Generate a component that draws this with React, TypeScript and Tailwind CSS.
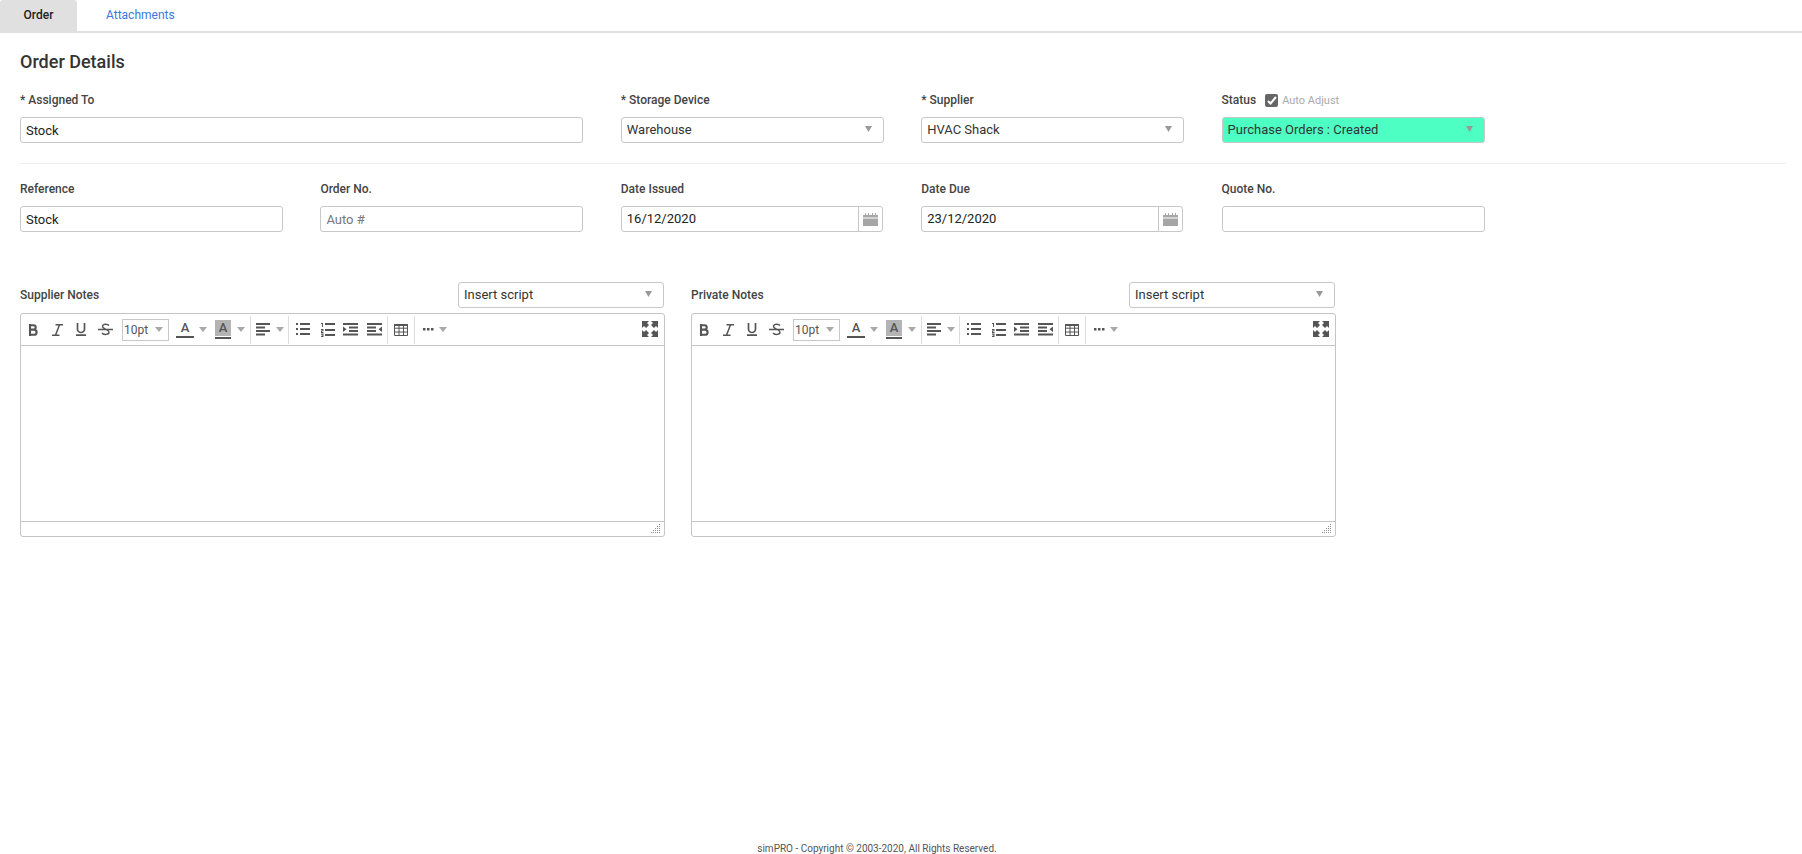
import React from 'react'

const ic = '#555555'

function Caret({ className = '' }: { className?: string }) {
  return (
    <svg width="8" height="5" viewBox="0 0 8 5" className={className}>
      <path d="M0 0h8L4 5z" fill="#a9a9a9" />
    </svg>
  )
}

function Field({ label, children, className = '' }: { label: React.ReactNode; children: React.ReactNode; className?: string }) {
  return (
    <div className={className}>
      <div className="h-4 text-[12px] leading-4 font-medium text-[#444] flex items-center whitespace-nowrap">{label}</div>
      <div className="mt-[9px]">{children}</div>
    </div>
  )
}

function TextInput({ value, placeholder }: { value?: string; placeholder?: string }) {
  return (
    <input
      readOnly
      value={value ?? ''}
      placeholder={placeholder}
      className="block w-full h-[26px] px-[5px] border border-[#c8c8c8] rounded-[3px] text-[13px] text-[#222] placeholder:text-[#777] outline-none bg-white"
    />
  )
}

function SelectBox({ value, className = 'bg-white' }: { value: string; className?: string }) {
  return (
    <div className={`flex items-center justify-between h-[26px] pl-[5px] pr-[11px] border border-[#c8c8c8] rounded-[3px] text-[13px] text-[#333] ${className}`}>
      <span>{value}</span>
      <svg width="7" height="6" viewBox="0 0 7 6" className="-mt-[3px]">
        <path d="M0 0h7L3.500 6z" fill="#999" />
      </svg>
    </div>
  )
}

function DateInput({ value }: { value: string }) {
  return (
    <div className="flex h-[26px] border border-[#c8c8c8] rounded-[3px] w-[262px] overflow-hidden">
      <div className="flex-1 px-[5px] text-[13px] leading-[24px] text-[#222]">{value}</div>
      <div className="w-[24px] border-l border-[#c8c8c8] flex items-center justify-center">
        <svg width="15" height="13" viewBox="0 0 15 13">
          <path d="M0 2h2V0h1v2h2V0h1v2h3V0h1v2h2V0h1v2h2v2.500H0zM0 5.500h15V13H0z" fill="#a6a6a6" />
        </svg>
      </div>
    </div>
  )
}

function Tb({ w = 24, children }: { w?: number; children: React.ReactNode }) {
  return (
    <div className="h-[22px] flex items-center justify-center shrink-0" style={{ width: w }}>
      {children}
    </div>
  )
}

function Sep() {
  return <div className="w-px h-[28px] bg-[#dddddd] shrink-0" />
}

function Lines({ rows }: { rows: [number, number][] }) {
  return (
    <svg width="14" height="13" viewBox="0 0 14 13">
      {rows.map(([x, w], i) => (
        <rect key={i} x={x} y={i * 3.5} width={w} height="2" fill={ic} />
      ))}
    </svg>
  )
}

function Toolbar() {
  return (
    <div className="h-[32px] border-b border-[#c5c5c5] flex items-center">
      <Tb>
        <svg width="10" height="12" viewBox="0 0 10 12" fill="none" stroke={ic} strokeWidth="2.100">
          <path d="M2 0v12M2 1.200h3.500a2.200 2.200 0 0 1 0 4.400H2M2 5.600h4a2.600 2.600 0 0 1 0 5.200H2" />
        </svg>
      </Tb>
      <Tb>
        <svg width="11" height="12" viewBox="0 0 11 12" fill="none" stroke={ic} strokeWidth="1.500">
          <path d="M3.500.800H11M0 11.200h7.500M7.500.800 3.500 11.200" />
        </svg>
      </Tb>
      <Tb>
        <svg width="10" height="13" viewBox="0 0 10 13" fill="none" stroke={ic} strokeWidth="1.700">
          <path d="M1.500 0v6a3.500 3.500 0 0 0 7 0V0M0 12.200h10" />
        </svg>
      </Tb>
      <Tb>
        <svg width="15" height="13" viewBox="0 0 15 13" fill="none" stroke={ic} strokeWidth="1.400">
          <path d="M11 2.500C10 1 5 .300 4.500 3.200 4 6 10.500 6 11 9c.3 2.800-5.500 3.200-7 1M0 6.500h15" />
        </svg>
      </Tb>
      <div className="ml-[5px] w-[47px] h-[22px] border border-[#c8c8c8] flex items-center justify-between pl-[1px] pr-[5px] text-[12px] text-[#555] shrink-0">
        <span>10pt</span>
        <Caret />
      </div>
      <div className="w-[5px] shrink-0" />
      <Tb w={22}>
        <div className="flex flex-col items-center w-[18px] -mt-[1px]">
          <span className="text-[13px] leading-[13px] font-medium text-[#555]">A</span>
          <span className="mt-[2px] w-full h-[2px] bg-[#555]" />
        </div>
      </Tb>
      <Tb w={14}>
        <Caret />
      </Tb>
      <div className="w-[5px] shrink-0" />
      <Tb w={16}>
        <div className="flex flex-col items-center w-[17px] -mt-[1px]">
          <span className="w-[16px] text-center bg-[#b4b4b4] text-[13px] leading-[16px] font-medium text-[#555]">A</span>
          <span className="mt-[1px] w-full h-[2px] bg-[#555]" />
        </div>
      </Tb>
      <Tb w={19}>
        <Caret />
      </Tb>
      <Sep />
      <div className="w-[4px] shrink-0" />
      <Tb w={16}>
        <Lines rows={[[0, 14], [0, 9], [0, 14], [0, 9]]} />
      </Tb>
      <Tb w={17}>
        <Caret />
      </Tb>
      <Sep />
      <Tb w={27}>
        <svg width="14" height="13" viewBox="0 0 14 13" fill={ic}>
          <path d="M0 0h2v2H0zM4 0h10v2H4zM0 5h2v2H0zM4 5h10v2H4zM0 10h2v2H0zM4 10h10v2H4z" />
        </svg>
      </Tb>
      <Tb w={23}>
        <svg width="14" height="14" viewBox="0 0 14 14" fill={ic}>
          <path d="M4 0h10v2H4zM4 6h10v2H4zM4 11h10v2H4zM0 0h2v4H1V1H0zM0 6h2.500v2.200H1v.8h1.500v1H0V7.500h1.500V7H0zM0 10.500h2.500V14H0v-1h1.500v-.5H.5v-.8h1v-.3H0z" />
        </svg>
      </Tb>
      <Tb w={23}>
        <svg width="15" height="13" viewBox="0 0 15 13" fill={ic}>
          <path d="M0 0h15v2H0zM6 3.500h9v2H6zM6 7h9v2H6zM0 10.500h15v2H0zM0 3.500 3.500 6.200 0 9z" />
        </svg>
      </Tb>
      <Tb w={25}>
        <svg width="15" height="13" viewBox="0 0 15 13" fill={ic}>
          <path d="M0 0h15v2H0zM0 3.500h9v2H0zM0 7h9v2H0zM0 10.500h15v2H0zM15 3.500 11.500 6.200 15 9z" />
        </svg>
      </Tb>
      <Sep />
      <Tb w={26}>
        <svg width="14" height="12" viewBox="0 0 14 12" fill="none" stroke={ic}>
          <path d="M.5.500h13v11H.500zM.5 4.200h13M.5 8h13M5 .5v11M9.500.5v11" />
          <path d="M.5 1h13" strokeWidth="2" />
        </svg>
      </Tb>
      <Sep />
      <Tb w={26}>
        <svg width="11" height="3" viewBox="0 0 11 3" fill={ic}>
          <path d="M0 0h2.500v2.500H0zM4 0h2.500v2.500H4zM8 0h2.500v2.500H8z" />
        </svg>
      </Tb>
      <Tb w={4}>
        <Caret className="shrink-0" />
      </Tb>
      <div className="ml-auto mr-[2px] -mt-[1px]">
        <Tb>
          <svg width="16" height="16" viewBox="0 0 16 16" fill={ic}>
            <path d="M0 0h7L5 2l2 2-3 3-2-2-2 2zM16 0v7l-2-2-2 2-3-3 2-2-2-2zM0 16V9l2 2 2-2 3 3-2 2 2 2zM16 16H9l2-2-2-2 3-3 2 2 2-2z" />
          </svg>
        </Tb>
      </div>
    </div>
  )
}

function NotesEditor({ label }: { label: string }) {
  return (
    <div className="w-[645px]">
      <div className="flex items-center justify-between pr-[1px]">
        <span className="text-[12px] font-medium text-[#444]">{label}</span>
        <SelectBox value="Insert script" className="w-[206px] bg-white" />
      </div>
      <div className="mt-[5px] h-[224px] border border-[#c5c5c5] rounded-[3px] flex flex-col">
        <Toolbar />
        <div className="flex-1 bg-white" />
        <div className="h-[15px] border-t border-[#c5c5c5] flex justify-end items-end pr-[3px] pb-[2px]">
          <svg width="10" height="10" viewBox="0 0 10 10" fill="#8f8f9f">
            <path d="M8 0h1v1H8zM6 2h1v1H6zM8 2h1v1H8zM4 4h1v1H4zM6 4h1v1H6zM8 4h1v1H8zM2 6h1v1H2zM4 6h1v1H4zM6 6h1v1H6zM8 6h1v1H8zM0 8h1v1H0zM2 8h1v1H2zM4 8h1v1H4zM6 8h1v1H6zM8 8h1v1H8z" />
          </svg>
        </div>
      </div>
    </div>
  )
}

export default function App() {
  return (
    <div className="h-[854px] overflow-hidden flex flex-col bg-white font-['Roboto',sans-serif]">
      {/* Tabs */}
      <div className="h-[33px] border-b-2 border-[#e0e0e0] flex text-[12px] shrink-0">
        <div className="w-[77px] h-[31px] bg-[#e0e0e0] rounded-t-[3px] flex items-center justify-center font-medium text-[#222] pb-[1px]">Order</div>
        <div className="ml-[29px] h-[31px] flex items-center text-[#3a78e0] pb-[1px]">Attachments</div>
      </div>

      <div className="pl-[20px] flex-1">
        <h3 className="mt-[17px] text-[18px] leading-[24px] font-medium text-[#333]">Order Details</h3>

        <div className="mt-[18px] grid grid-cols-[repeat(6,263px)] gap-x-[37.4px]">
          <Field label="* Assigned To" className="col-span-2">
            <TextInput value="Stock" />
          </Field>
          <Field label="* Storage Device">
            <SelectBox value="Warehouse" />
          </Field>
          <Field label="* Supplier">
            <SelectBox value="HVAC Shack" />
          </Field>
          <Field
            label={
              <>
                Status
                <span className="ml-[9px] w-[13px] h-[13px] rounded-[2px] bg-[#666] inline-flex items-center justify-center">
                  <svg width="10" height="9" viewBox="0 0 10 9" fill="none" stroke="#fff" strokeWidth="2">
                    <path d="M1 5l2.500 2.500L9 1" />
                  </svg>
                </span>
                <span className="ml-[4px] mt-[1px] text-[11px] font-normal text-[#aaa]">Auto Adjust</span>
              </>
            }
          >
            <SelectBox value="Purchase Orders : Created" className="bg-[#4dffc3]" />
          </Field>
        </div>

        <div className="mt-[20px] -ml-px w-[1767px] h-px bg-[#eeeeee]" />

        <div className="mt-[17px] grid grid-cols-[repeat(6,263px)] gap-x-[37.4px]">
          <Field label="Reference">
            <TextInput value="Stock" />
          </Field>
          <Field label="Order No.">
            <TextInput placeholder="Auto #" />
          </Field>
          <Field label="Date Issued">
            <DateInput value="16/12/2020" />
          </Field>
          <Field label="Date Due">
            <DateInput value="23/12/2020" />
          </Field>
          <Field label="Quote No.">
            <TextInput />
          </Field>
        </div>

        <div className="mt-[50px] flex gap-[26px]">
          <NotesEditor label="Supplier Notes" />
          <NotesEditor label="Private Notes" />
        </div>
      </div>

      <div className="h-[11px] pr-[48px] text-center text-[10px] leading-[11px] text-[#555] shrink-0">simPRO - Copyright © 2003-2020, All Rights Reserved.</div>
    </div>
  )
}
